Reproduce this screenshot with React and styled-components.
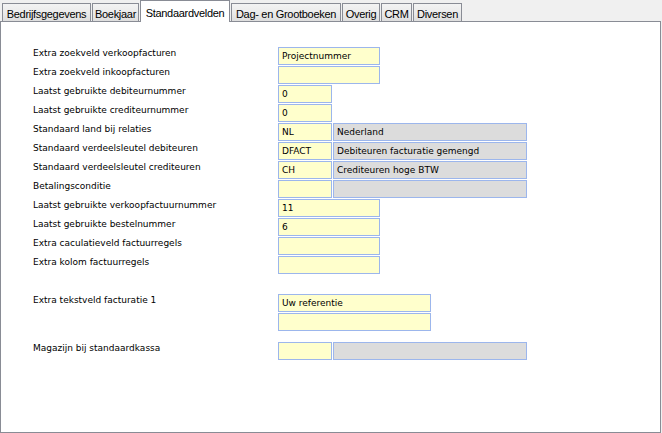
import React from "react";
import styled, { createGlobalStyle } from "styled-components";

const GlobalStyle = createGlobalStyle`
  html, body { margin: 0; padding: 0; background: #f0f0f0; }
  body { width: 662px; height: 433px; overflow: hidden; }
`;

const Window = styled.div`
  width: 662px;
  height: 433px;
  display: flex;
  flex-direction: column;
  background: #f0f0f0;
`;

const TabBar = styled.div`
  display: flex;
  align-items: flex-end;
  gap: 1px;
  height: 21px;
  padding-left: 2px;
  flex: none;
`;

const Tab = styled.div`
  box-sizing: border-box;
  position: relative;
  width: ${(p) => p.$w}px;
  height: ${(p) => (p.$active ? 22 : 18)}px;
  margin-bottom: ${(p) => (p.$active ? -1 : 0)}px;
  z-index: ${(p) => (p.$active ? 2 : 1)};
  padding-top: ${(p) => (p.$active ? 5 : 3)}px;
  border: 1px solid #898c95;
  border-bottom: none;
  background: ${(p) =>
    p.$active ? "#ffffff" : "linear-gradient(#f3f3f3, #ebebeb 50%, #dedede)"};
  font-family: "Liberation Sans", Arial, sans-serif;
  font-size: 11px;
  letter-spacing: -0.3px;
  line-height: 14px;
  color: #000;
  text-align: center;
  white-space: nowrap;
`;

const Panel = styled.div`
  box-sizing: border-box;
  width: 661px;
  height: 412px;
  border: 1px solid #898c95;
  background: #ffffff;
  padding: 25px 0 0 32px;
  display: flex;
  flex-direction: column;
`;

const Row = styled.div`
  display: grid;
  grid-template-columns: 245px auto;
  height: 18px;
  margin-bottom: ${(p) => p.$after ?? 1}px;
`;

const Label = styled.div`
  font-family: "DejaVu Sans", Verdana, sans-serif;
  font-size: 9px;
  line-height: 11px;
  padding-top: 1px;
  color: #000;
  white-space: nowrap;
`;

const Fields = styled.div`
  display: flex;
  gap: 1px;
`;

const Field = styled.div`
  box-sizing: border-box;
  width: ${(p) => p.$w}px;
  height: 18px;
  border: 1px solid #9cb6ec;
  background: ${(p) => (p.$ro ? "#dcdcdc" : "#ffffcc")};
  padding-left: 3px;
  font-family: "DejaVu Sans", Verdana, sans-serif;
  font-size: 9px;
  line-height: 16px;
  color: #000;
  white-space: nowrap;
  overflow: hidden;
`;

const tabs = [
  { t: "Bedrijfsgegevens", w: 89 },
  { t: "Boekjaar", w: 47 },
  { t: "Standaardvelden", w: 90, active: true },
  { t: "Dag- en Grootboeken", w: 110 },
  { t: "Overig", w: 38 },
  { t: "CRM", w: 31 },
  { t: "Diversen", w: 49 },
];

const WIDE = 102;
const SHORT = 54;
const DESC = 194;
const TEXT = 153;

const rows = [
  { l: "Extra zoekveld verkoopfacturen", f: [{ w: WIDE, v: "Projectnummer" }] },
  { l: "Extra zoekveld inkoopfacturen", f: [{ w: WIDE, v: "" }] },
  { l: "Laatst gebruikte debiteurnummer", f: [{ w: SHORT, v: "0" }] },
  { l: "Laatst gebruikte crediteurnummer", f: [{ w: SHORT, v: "0" }] },
  { l: "Standaard land bij relaties", f: [{ w: SHORT, v: "NL" }, { w: DESC, v: "Nederland", ro: true }] },
  { l: "Standaard verdeelsleutel debiteuren", f: [{ w: SHORT, v: "DFACT" }, { w: DESC, v: "Debiteuren facturatie gemengd", ro: true }] },
  { l: "Standaard verdeelsleutel crediteuren", f: [{ w: SHORT, v: "CH" }, { w: DESC, v: "Crediteuren hoge BTW", ro: true }] },
  { l: "Betalingsconditie", f: [{ w: SHORT, v: "" }, { w: DESC, v: "", ro: true }] },
  { l: "Laatst gebruikte verkoopfactuurnummer", f: [{ w: WIDE, v: "11" }] },
  { l: "Laatst gebruikte bestelnummer", f: [{ w: WIDE, v: "6" }] },
  { l: "Extra caculatieveld factuurregels", f: [{ w: WIDE, v: "" }] },
  { l: "Extra kolom factuurregels", f: [{ w: WIDE, v: "" }], after: 20 },
  { l: "Extra tekstveld facturatie 1", f: [{ w: TEXT, v: "Uw referentie" }] },
  { l: "", f: [{ w: TEXT, v: "" }], after: 11 },
  { l: "Magazijn bij standaardkassa", f: [{ w: SHORT, v: "" }, { w: DESC, v: "", ro: true }] },
];

export default function App() {
  return (
    <>
      <GlobalStyle />
      <Window>
        <TabBar>
          {tabs.map((t) => (
            <Tab key={t.t} $w={t.w} $active={t.active}>
              {t.t}
            </Tab>
          ))}
        </TabBar>
        <Panel>
          {rows.map((r, i) => (
            <Row key={i} $after={r.after}>
              <Label>{r.l}</Label>
              <Fields>
                {r.f.map((f, j) => (
                  <Field key={j} $w={f.w} $ro={f.ro}>
                    {f.v}
                  </Field>
                ))}
              </Fields>
            </Row>
          ))}
        </Panel>
      </Window>
    </>
  );
}
